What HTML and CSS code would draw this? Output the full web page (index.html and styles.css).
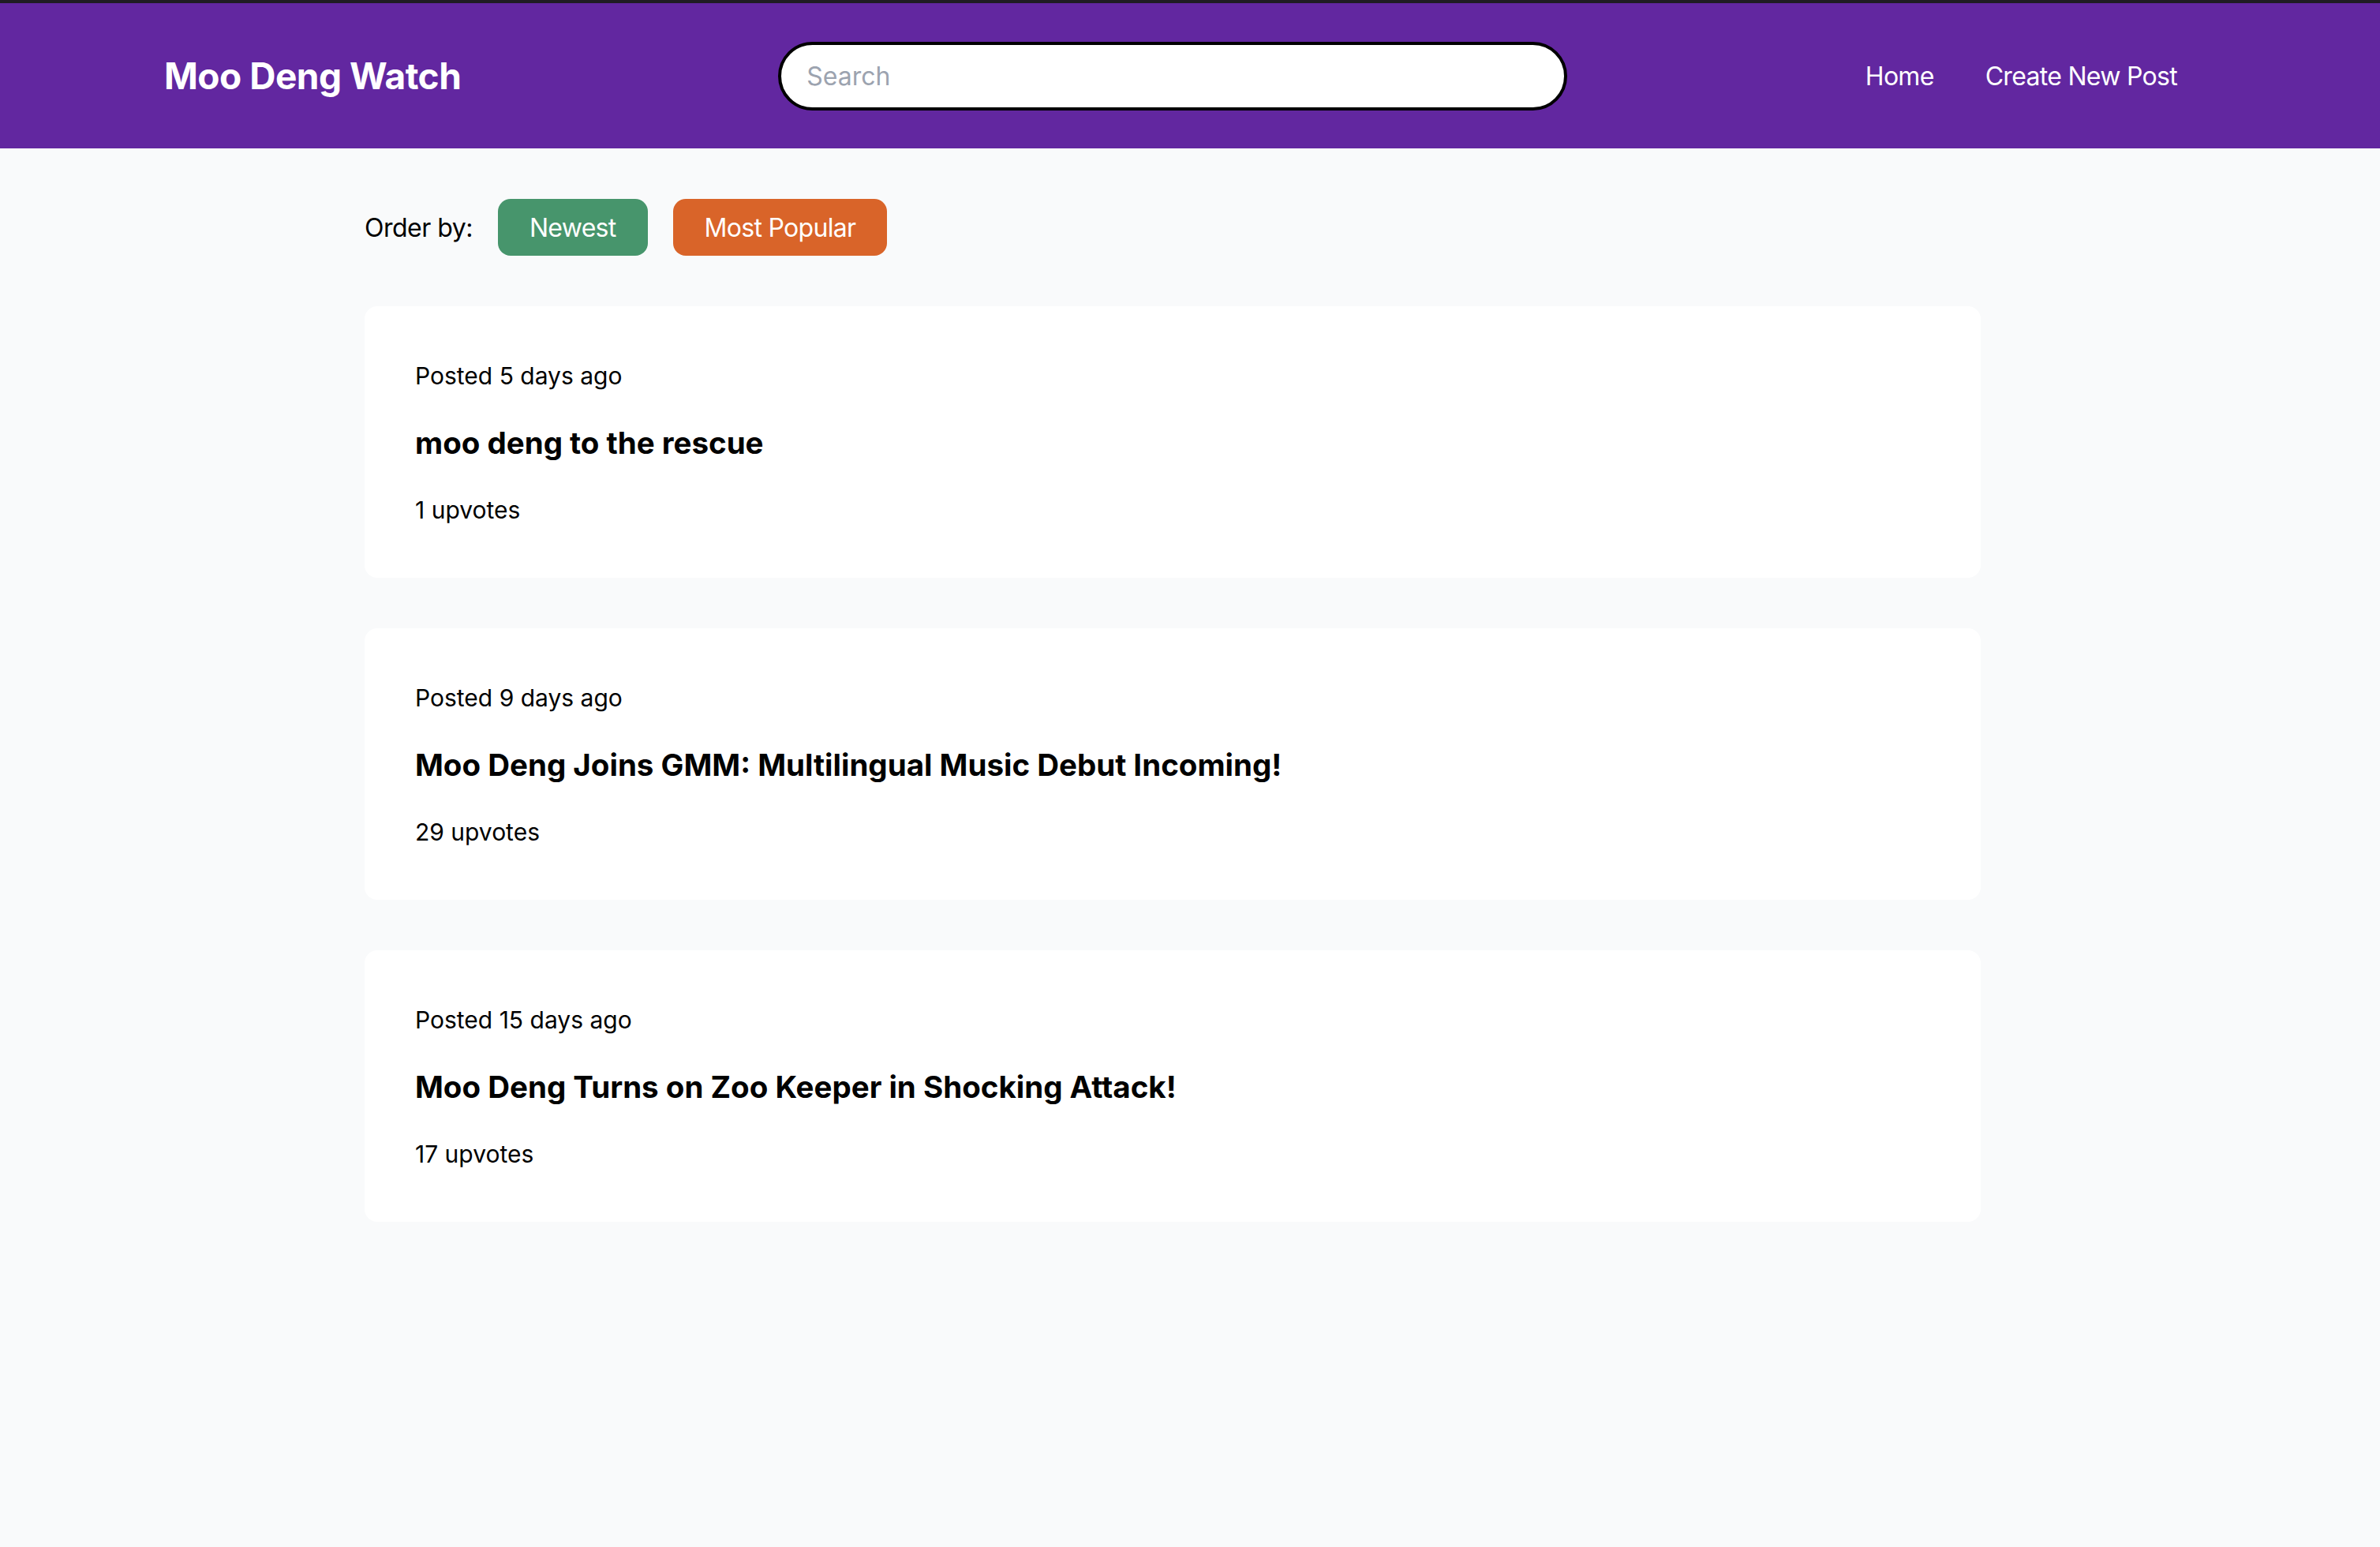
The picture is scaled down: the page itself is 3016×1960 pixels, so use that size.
FILE: index.html
```html
<!DOCTYPE html>
<html lang="en">
<head>
<meta charset="utf-8">
<title>Moo Deng Watch</title>
<link rel="stylesheet" href="styles.css">
</head>
<body>
<header class="topbar">
  <a class="logo" href="#">Moo Deng Watch</a>
  <input class="search" type="text" placeholder="Search">
  <nav class="nav">
    <a href="#">Home</a>
    <a href="#">Create New Post</a>
  </nav>
</header>
<main class="main">
  <div class="order">
    <span class="order-label">Order by:</span>
    <button class="btn btn-green">Newest</button>
    <button class="btn btn-orange">Most Popular</button>
  </div>
  <article class="card">
    <p class="meta">Posted 5 days ago</p>
    <h2 class="title">moo deng to the rescue</h2>
    <p class="votes">1 upvotes</p>
  </article>
  <article class="card">
    <p class="meta">Posted 9 days ago</p>
    <h2 class="title">Moo Deng Joins GMM: Multilingual Music Debut Incoming!</h2>
    <p class="votes">29 upvotes</p>
  </article>
  <article class="card">
    <p class="meta">Posted 15 days ago</p>
    <h2 class="title">Moo Deng Turns on Zoo Keeper in Shocking Attack!</h2>
    <p class="votes">17 upvotes</p>
  </article>
</main>
</body>
</html>
```
FILE: styles.css
```css
* { box-sizing: border-box; }
html, body { margin: 0; padding: 0; }
body {
  background: #f9fafb;
  font-family: Inter, "Noto Sans", "Liberation Sans", sans-serif;
  color: #000;
  min-height: 1960px;
}
.topbar {
  border-top: 4px solid #1f1c23;
  background: #6227a0;
  height: 188px;
  display: flex;
  align-items: center;
  padding: 0 257px 0 208px;
}
.logo {
  color: #fff;
  font-weight: 700;
  font-size: 46px;
  text-decoration: none;
  letter-spacing: -0.5px;
}
.search {
  width: 1000px;
  height: 87px;
  margin-left: 402px;
  border: 4px solid #000;
  border-radius: 999px;
  background: #fff;
  padding: 0 32px;
  font-family: inherit;
  font-size: 32px;
  color: #111;
  outline: none;
}
.search::placeholder { color: #9ca3af; }
.nav {
  display: flex;
  gap: 65px;
  margin-left: auto;
}
.nav a {
  color: #fff;
  text-decoration: none;
  font-size: 32px;
  letter-spacing: -0.7px;
}
.main {
  width: 2048px;
  margin-left: 462px;
  padding-top: 64px;
}
.order {
  display: flex;
  align-items: center;
  gap: 32px;
  margin-bottom: 64px;
}
.order-label {
  font-size: 32px;
  letter-spacing: -0.5px;
}
.btn {
  height: 72px;
  padding: 0 40px;
  border: none;
  border-radius: 16px;
  color: #fff;
  font-family: inherit;
  font-size: 32px;
  letter-spacing: -0.7px;
}
.btn-green { background: #47956c; }
.btn-orange { background: #d96429; }
.card {
  background: #fff;
  border-radius: 16px;
  padding: 64px;
  margin-bottom: 64px;
  height: 344px;
}
.meta {
  margin: 0;
  font-size: 30px;
  line-height: 48px;
}
.title {
  margin: 37px 0 0;
  font-size: 38.5px;
  line-height: 48px;
  font-weight: 700;
}
.votes {
  margin: 37px 0 0;
  font-size: 30px;
  line-height: 48px;
}
```
